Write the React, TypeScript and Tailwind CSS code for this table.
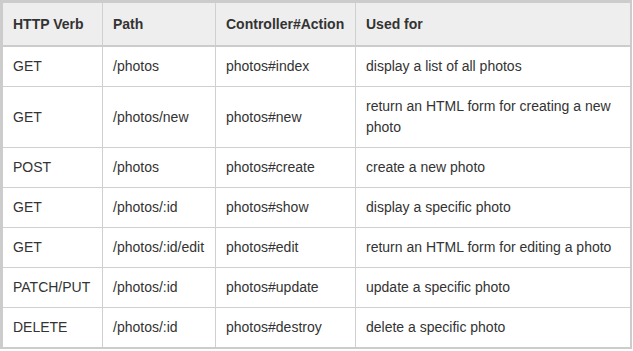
import React from "react";

const rows: [string, string, string, string][] = [
  ["GET", "/photos", "photos#index", "display a list of all photos"],
  ["GET", "/photos/new", "photos#new", "return an HTML form for creating a new photo"],
  ["POST", "/photos", "photos#create", "create a new photo"],
  ["GET", "/photos/:id", "photos#show", "display a specific photo"],
  ["GET", "/photos/:id/edit", "photos#edit", "return an HTML form for editing a photo"],
  ["PATCH/PUT", "/photos/:id", "photos#update", "update a specific photo"],
  ["DELETE", "/photos/:id", "photos#destroy", "delete a specific photo"],
];

const widths = ["w-[100px]", "w-[113px]", "w-[140px]", "w-[274px]"];

export default function App() {
  return (
    <div className="w-[633px] h-[351px] bg-white" style={{ fontFamily: '"Liberation Sans", Arial, sans-serif' }}>
      <div className="w-[632px] border-l-[3px] border-t-[3px] border-r-2 border-b-2 border-[#cccccc] text-[14px] leading-[21px] text-[#333333]">
        <div className="flex bg-[#eeeeee] border-b-2 border-[#cccccc] font-bold">
          {["HTTP Verb", "Path", "Controller#Action", "Used for"].map((h, i) => (
            <div
              key={h}
              className={`${i === 0 ? "w-[99px]" : widths[i]} ${i > 0 ? "border-l border-[#d0d0d0]" : ""} h-[42px] px-[10px] flex items-center shrink-0`}
            >
              {h}
            </div>
          ))}
        </div>
        {rows.map((r, ri) => (
          <div key={ri} className={`flex ${ri < rows.length - 1 ? "border-b border-[#d0d0d0]" : ""}`}>
            {r.map((c, i) => (
              <div
                key={i}
                className={`${i === 0 ? "w-[99px]" : widths[i]} ${i > 0 ? "border-l border-[#d0d0d0]" : ""} py-[9px] px-[10px] flex items-center shrink-0`}
              >
                {c}
              </div>
            ))}
          </div>
        ))}
      </div>
    </div>
  );
}
